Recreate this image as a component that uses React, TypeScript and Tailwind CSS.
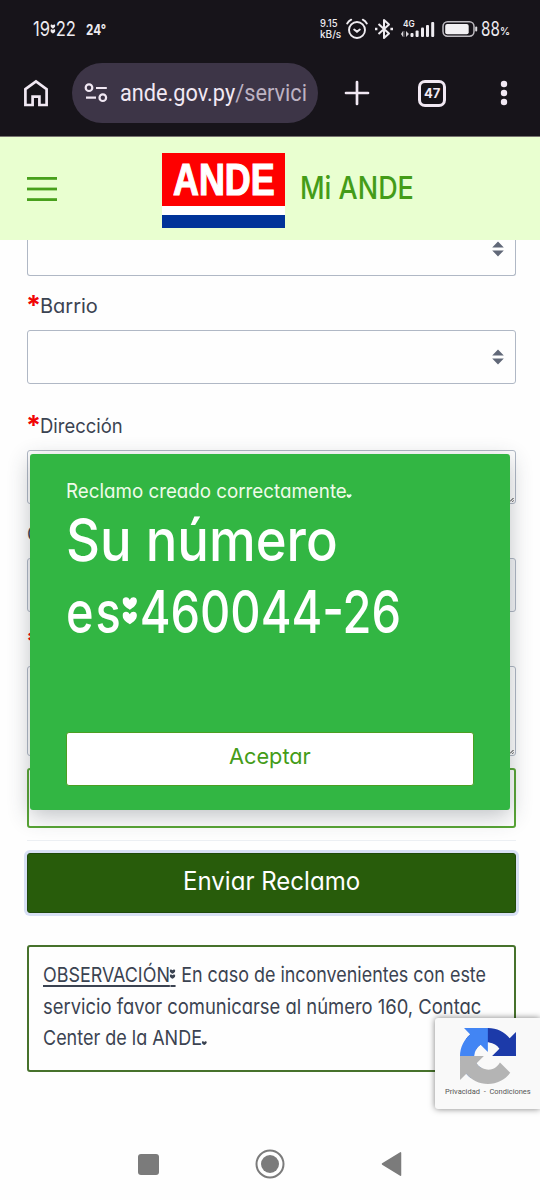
import { ReactNode, useLayoutEffect, useRef, useState } from "react";
import clsx from "clsx";

const BODY_FONT = "font-['Inter',sans-serif] [font-feature-settings:'cv11'] ";

// Single line of text squeezed or stretched to an exact width.
function Fit({ width, className, children }: { width: number; className?: string; children: ReactNode }) {
  const ref = useRef<HTMLSpanElement>(null);
  const [scale, setScale] = useState(1);

  useLayoutEffect(() => {
    if (ref.current) setScale(width / ref.current.offsetWidth);
  }, [width]);

  return (
    <span className={clsx("block shrink-0 whitespace-nowrap", className)} style={{ width }}>
      <span ref={ref} className="inline-block origin-left align-top" style={{ transform: `scaleX(${scale})` }}>
        {children}
      </span>
    </span>
  );
}

const HEART = "M5 9C2.5 7.5 0 5.5 0 2.8C0 .3 3.6-.7 5 2.2C6.4-.7 10 .3 10 2.8C10 5.5 7.5 7.5 5 9Z";

function HeartColon() {
  return (
    <span className="relative px-[0.03em]">
      <span className="text-transparent">:</span>
      <svg className="absolute left-0 top-[0.34em] h-[0.49em] w-[0.31em]" viewBox="0 -0.5 10 20" preserveAspectRatio="none" fill="currentColor">
        <path d={HEART} />
        <path d={HEART} transform="translate(0 10)" />
      </svg>
    </span>
  );
}

function HeartDot() {
  return (
    <span className="relative">
      <span className="text-transparent">.</span>
      <svg className="absolute bottom-[0.26em] left-0 h-[0.2em] w-[0.28em]" viewBox="0 0 10 9" preserveAspectRatio="none" fill="currentColor">
        <path d={HEART} />
      </svg>
    </span>
  );
}

function StatusBar() {
  return (
    <div className="flex h-[58px] items-center text-[#eeebf0]">
      <Fit width={43} className="ml-[33px] text-[20px] leading-[58px]">
        19<HeartColon />22
      </Fit>
      <Fit width={20} className="ml-[10px] text-[14px] font-bold">24°</Fit>
      <div className="ml-[214px] w-[22px] text-[10px] font-medium leading-[11px]">
        <Fit width={18}>9.15</Fit>
        <Fit width={21}>kB/s</Fit>
      </div>
      <svg className="ml-[4px] h-[22px] w-[22px]" viewBox="0 0 22 22" fill="none" stroke="currentColor" strokeWidth="1.9" strokeLinecap="round">
        <circle cx="11" cy="12" r="8" />
        <path d="M1.2 5.5Q2.6 3 5.2 1.7M20.8 5.5Q19.4 3 16.8 1.7M8.2 11.5L11 13.8L13.8 11.5" />
      </svg>
      <svg className="ml-[6px] h-[22px] w-[20px]" viewBox="0 0 20 22" fill="none" stroke="currentColor" strokeWidth="2" strokeLinejoin="round">
        <path d="M4.5 6L15 15.5L10 20V2L15 6.5L4.5 16" />
        <path d="M1 11H3.4M16.4 11H19" strokeWidth="2.6" />
      </svg>
      <div className="relative ml-[7px] h-[22px] w-[34px]">
        <Fit width={12} className="absolute left-[2px] top-0 text-[9px] font-semibold leading-[12px]">4G</Fit>
        <svg className="block h-[22px] w-[34px]" viewBox="0 0 34 22" fill="currentColor">
          <path d="M0 16l2-3v6zM5 13l3 3-3 3z" opacity=".9" />
          <rect x="2.4" y="13" width="1" height="6" opacity=".5" />
          <rect x="9.5" y="15" width="3" height="4" rx="1" />
          <rect x="14.6" y="12.5" width="3" height="6.5" rx="1" />
          <rect x="20" y="9.5" width="3" height="9.5" rx="1" />
          <rect x="25" y="7" width="3" height="12" rx="1" />
          <rect x="30.2" y="4" width="3" height="15" rx="1" />
        </svg>
      </div>
      <svg className="ml-[7px] h-[18px] w-[36px]" viewBox="0 0 36 18" fill="none">
        <rect x="1" y="1.8" width="31" height="14.4" rx="4.6" stroke="#bdbac0" strokeWidth="1.5" />
        <rect x="3.2" y="3.9" width="23.5" height="10.4" rx="2" fill="#f2f0f3" />
        <rect x="33.2" y="6.5" width="2" height="5" rx="1" fill="#dddadf" />
      </svg>
      <Fit width={19} className="ml-[3px] text-[20px]">88</Fit>
      <Fit width={10} className="pt-[4px] text-[11px] font-semibold">%</Fit>
    </div>
  );
}

function BrowserBar() {
  return (
    <div className="flex h-[70px] items-center text-[#f1e8f3]">
      <svg className="ml-[24px] h-[28px] w-[24px]" viewBox="0 0 24 28" fill="none" stroke="currentColor" strokeWidth="2.7">
        <path d="M1.4 10.2L12 2.4L22.6 10.2V26H15.4V17.6H8.6V26H1.4Z" />
      </svg>
      <div className="ml-[24px] flex h-[60px] w-[246px] items-center rounded-full bg-[#3d3547]">
        <svg className="ml-[12px] h-[20px] w-[24px]" viewBox="0 0 24 20" fill="none" stroke="currentColor" strokeWidth="2.2">
          <circle cx="5" cy="4.7" r="3.3" />
          <path d="M12 5H22.8M2 14.7H12" />
          <circle cx="18.8" cy="14.7" r="3.3" />
        </svg>
        <Fit width={187} className="ml-[12px] pt-[2px] font-['Roboto',sans-serif] text-[23px] leading-[58px]">
          ande.gov.py<span className="text-[#bdb3c3]">/servici</span>
        </Fit>
      </div>
      <svg className="ml-[26px] h-[26px] w-[26px]" viewBox="0 0 26 26" stroke="currentColor" strokeWidth="2.7" strokeLinecap="round">
        <path d="M13 2V24M2 13H24" />
      </svg>
      <div className="ml-[48px] flex h-[27px] w-[28px] items-center justify-center rounded-[7px] border-[3px] border-[#f1e8f3]">
        <Fit width={16} className="text-[13px] font-bold leading-none">47</Fit>
      </div>
      <svg className="ml-[54px] h-[28px] w-[8px]" viewBox="0 0 8 28" fill="currentColor">
        <circle cx="4" cy="5" r="3.2" />
        <circle cx="4" cy="14" r="3.2" />
        <circle cx="4" cy="23" r="3.2" />
      </svg>
    </div>
  );
}

function SiteHeader() {
  return (
    <header className="flex h-[104px] items-center border-t border-[#77736f] bg-[#e9ffd0]">
      <svg className="ml-[27px] h-[24px] w-[30px]" viewBox="0 0 30 24" fill="#48a01c">
        <rect width="30" height="2.8" />
        <rect y="10.6" width="30" height="2.8" />
        <rect y="21.2" width="30" height="2.8" />
      </svg>
      <div className="ml-[105px] mt-[3px] w-[123px] bg-white">
        <div className="flex h-[53px] justify-center bg-[#fe0000]">
          <Fit width={102} className="font-['Liberation_Sans',sans-serif] text-[44px] font-bold leading-[54px] text-white [-webkit-text-stroke:1.2px_white]">
            ANDE
          </Fit>
        </div>
        <div className="mt-[9px] h-[13px] bg-[#003399]" />
      </div>
      <Fit width={114} className="ml-[15px] pb-[2px] text-[31px] font-[450] leading-[99px] text-[#449c18]">Mi ANDE</Fit>
    </header>
  );
}

function SelectArrows() {
  return (
    <svg className="h-[16px] w-[12px]" viewBox="0 0 12 16" fill="#616878">
      <path d="M6 .6L11.8 6.6H.2ZM6 15.4L.2 9.4H11.8Z" />
    </svg>
  );
}

function Required() {
  return (
    <span className="block h-[24px] w-[13px]">
      <Fit width={15} className="-ml-px text-[27px] font-bold leading-[23px] text-[#f00505]">*</Fit>
    </span>
  );
}

function Label({ text, width }: { text: string; width: number }) {
  return (
    <label className="flex h-[24px] items-center">
      <Required />
      <Fit width={width} className="text-[20px] leading-[24px]">{text}</Fit>
    </label>
  );
}

function TextArea({ className }: { className: string }) {
  return (
    <div className={clsx("flex items-end justify-end rounded-[3px] border border-[#b0b8c5] p-px", className)}>
      <svg className="h-[5px] w-[5px]" viewBox="0 0 5 5" stroke="#333" strokeWidth="1">
        <path d="M1 4.5L4.5 1M3.4 4.8L4.8 3.4" />
      </svg>
    </div>
  );
}

function ClaimForm() {
  return (
    <main className="px-[27px] text-[#3b4351]">
      <div className="flex h-[36px] w-[489px] justify-end rounded-b-[3px] border border-t-0 border-[#b0b8c5] pr-[11px] pt-[1px]">
        <SelectArrows />
      </div>
      <div className="mt-[18px]">
        <Label text="Barrio" width={58} />
        <div className="mt-[12px] flex h-[54px] w-[489px] items-center justify-end rounded-[3px] border border-[#b0b8c5] pr-[11px]">
          <SelectArrows />
        </div>
      </div>
      <div className="mt-[30px]">
        <Label text="Dirección" width={83} />
        <TextArea className="mt-[12px] h-[54px] w-[489px]" />
      </div>
      <div className="mt-[18px]">
        <Fit width={14} className="text-[20px] leading-[24px]">C</Fit>
        <div className="mt-[12px] h-[54px] w-[489px] rounded-[3px] border border-[#b0b8c5] bg-[#f4f5f7]" />
      </div>
      <div className="mt-[18px]">
        <Required />
        <TextArea className="mt-[12px] h-[90px] w-[489px]" />
      </div>
      <div className="mt-[12px] h-[60px] w-[489px] rounded-[3px] border-2 border-[#58a535]" />
      <div className="mt-[12px] h-px w-[489px] bg-[#eceff3]" />
      <button className="mt-[12px] flex h-[60px] w-[489px] items-center justify-center rounded-[3px] border border-[#204a0b] bg-[#285c0b] pb-[5px] text-white ring-[3px] ring-[#d8e0f5]">
        <Fit width={177} className="text-left text-[25px] leading-[40px]">Enviar Reclamo</Fit>
      </button>
      <div className="mt-[32px] h-[127px] w-[489px] rounded-[3px] border-2 border-[#47722c] pl-[14px] pt-[12px] text-[20.5px] leading-[31.5px]">
        <Fit width={443}>
          <span className="underline decoration-[1.5px] underline-offset-[3px]">OBSERVACIÓN<HeartColon /></span> En caso de inconvenientes con este
        </Fit>
        <Fit width={438}>servicio favor comunicarse al número 160, Contac</Fit>
        <Fit width={164}>Center de la ANDE<HeartDot /></Fit>
      </div>
    </main>
  );
}

function SuccessDialog() {
  return (
    <div className="absolute left-[30px] top-[454px] h-[356px] w-[480px] rounded-[3px] bg-[#32b643] px-[36px] pt-[22px] text-white shadow-[0_6px_22px_rgba(48,55,66,0.3)]">
      <Fit width={286} className="text-[20px] leading-[30px] text-[#effbea]">
        Reclamo creado correctamente<HeartDot />
      </Fit>
      <h1 className="-mt-[2px] text-[59px] font-[450] leading-[72px]">
        <Fit width={272}>Su número</Fit>
        <Fit width={335}>
          <span className="tracking-[0.04em]">es</span><HeartColon />460044-26
        </Fit>
      </h1>
      <button className="mt-[84px] flex h-[54px] w-[408px] items-center justify-center rounded-[3px] border border-[#4a9f22] bg-white pb-[7px] text-[#449c18]">
        <Fit width={82} className="text-left text-[22px] leading-[40px]">Aceptar</Fit>
      </button>
    </div>
  );
}

function CaptchaBadge() {
  return (
    <div className="absolute left-[435px] top-[1018px] h-[91px] w-[105px] rounded-l-[3px] bg-[#f9f9f9] pt-[10px] shadow-[0_0_6px_rgba(0,0,0,0.5)]">
      <svg className="ml-[25px] h-[56px] w-[56px]" viewBox="0 0 64 64">
        <path fill="#1c3aa9" d="M64 31.955l-.033-1.37V4.687l-7.16 7.16C50.948 4.674 42.033.093 32.05.093c-10.4 0-19.622 4.96-25.458 12.64l11.736 11.86a15.55 15.55 0 0 1 4.754-5.334c2.05-1.6 4.952-2.906 8.968-2.906.485 0 .86.057 1.135.163 4.976.393 9.288 3.14 11.828 7.124l-8.307 8.307L64 31.953" />
        <path fill="#4285f4" d="M31.862.094l-1.37.033H4.594l7.16 7.16C4.58 13.147 0 22.06 0 32.046c0 10.4 4.96 19.622 12.64 25.458L24.5 45.768a15.55 15.55 0 0 1-5.334-4.754c-1.6-2.05-2.906-4.952-2.906-8.968 0-.485.057-.86.163-1.135.393-4.976 3.14-9.288 7.124-11.828l8.307 8.307L31.86.095" />
        <path fill="#b4b4b4" d="M.001 32.045l.033 1.37v25.898l7.16-7.16c5.86 7.173 14.774 11.754 24.76 11.754 10.4 0 19.622-4.96 25.458-12.64l-11.736-11.86a15.55 15.55 0 0 1-4.754 5.334c-2.05 1.6-4.952 2.906-8.968 2.906-.485 0-.86-.057-1.135-.163-4.976-.393-9.288-3.14-11.828-7.124l8.307-8.307c-10.522.04-22.4.066-27.295-.005" />
      </svg>
      <Fit width={86} className="ml-[10px] mt-[2px] font-['Roboto',sans-serif] text-[8px] leading-[12px] text-[#555]">
        Privacidad &nbsp;-&nbsp; Condiciones
      </Fit>
    </div>
  );
}

function SystemNav() {
  return (
    <nav className="mt-[76px] flex h-[32px] items-center text-[#7b7b7b]">
      <span className="ml-[138px] h-[21px] w-[21px] rounded-[3px] bg-[#7b7b7b]" />
      <svg className="ml-[96px] h-[30px] w-[30px]" viewBox="0 0 30 30">
        <circle cx="15" cy="15" r="13.5" fill="none" stroke="currentColor" strokeWidth="2" />
        <circle cx="15" cy="15" r="9" fill="currentColor" />
      </svg>
      <svg className="ml-[96px] h-[26px] w-[22px]" viewBox="0 0 22 26" fill="currentColor" stroke="currentColor" strokeWidth="1.5" strokeLinejoin="round">
        <path d="M1.5 13L19.5 1.8V24.2Z" />
      </svg>
    </nav>
  );
}

export default function App() {
  return (
    <div className={clsx(BODY_FONT, "relative h-[1200px] w-[540px] overflow-hidden bg-[#fefefe]")}>
      <div className="h-[136px] bg-[#17141a]">
        <StatusBar />
        <BrowserBar />
      </div>
      <SiteHeader />
      <ClaimForm />
      <SystemNav />
      <SuccessDialog />
      <CaptchaBadge />
    </div>
  );
}
